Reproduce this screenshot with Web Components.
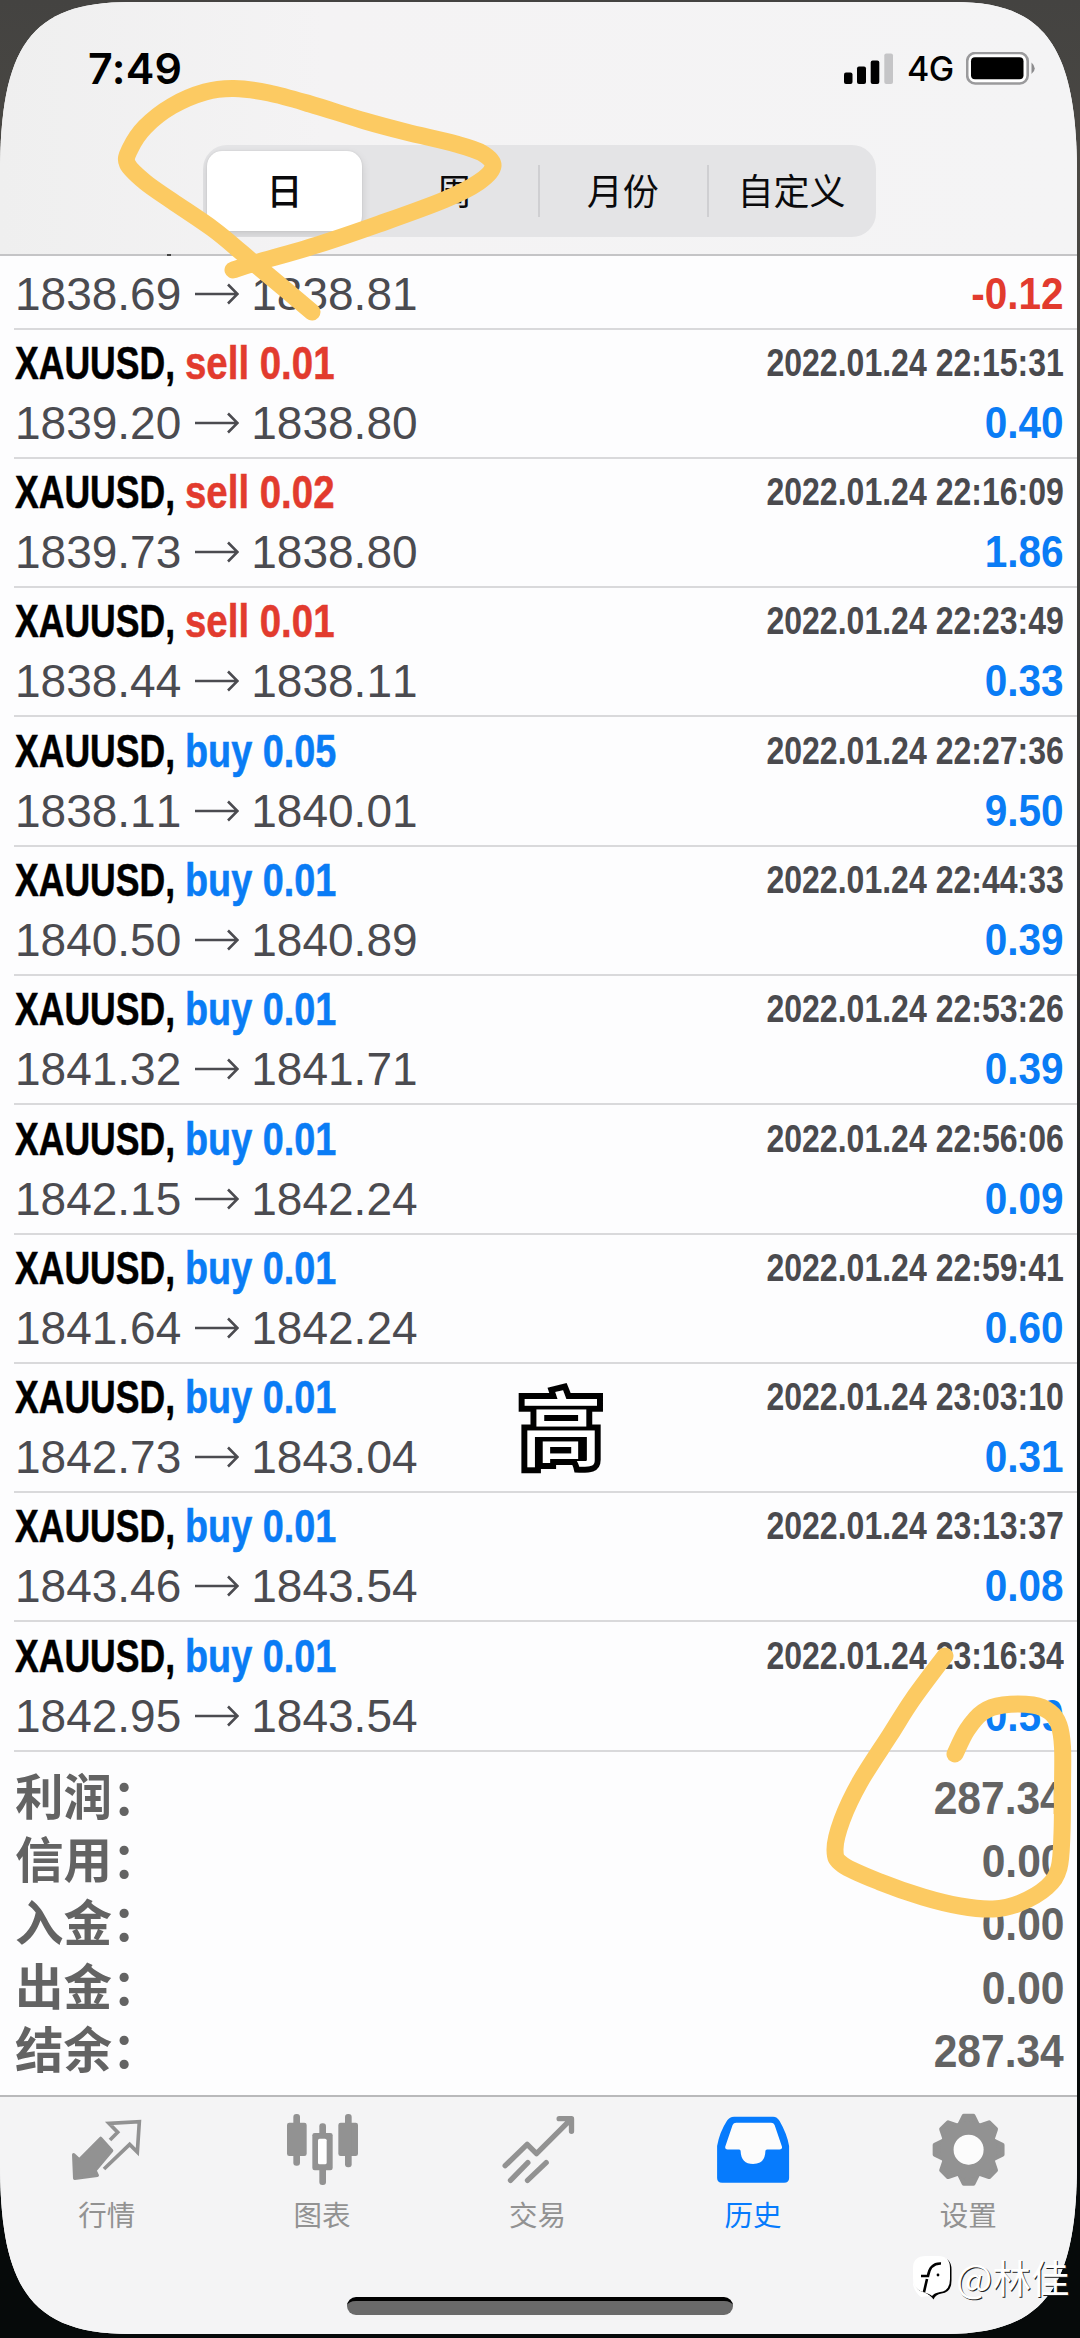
<!DOCTYPE html>
<html lang="zh">
<head>
<meta charset="utf-8">
<title>历史</title>
<style>
html,body{margin:0;padding:0}
body{width:1080px;height:2338px;overflow:hidden;background:linear-gradient(#444341 0,#4a4843 180px,#333 900px,#060a0a 1700px,#060a0a 100%);font-family:"Liberation Sans","Noto Sans CJK SC",sans-serif}
</style>
</head>
<body>
<history-app></history-app>
<script>
const CJK = '"Noto Sans CJK SC",sans-serif';
function define(name, render) {
  customElements.define(name, class extends HTMLElement {
    connectedCallback() {
      if (this.shadowRoot) return;
      this.attachShadow({mode: 'open'}).innerHTML = render(this);
    }
  });
}

/* Horizontally condensed text; the scale and anchor come from attributes. */
define('cond-text', el => `<style>
:host{display:block;white-space:pre;font-kerning:none}
span{display:inline-block;transform:scaleX(${el.getAttribute('scale')});transform-origin:${el.getAttribute('anchor') || 'left'} center}
</style><span><slot></slot></span>`);

define('status-bar', () => `<style>
:host{display:flex;height:93px;padding:0 41px 0 88px;align-items:flex-start;justify-content:space-between;color:#000;font-family:Inter,sans-serif}
.time{font-size:43px;font-weight:600;line-height:52px;margin-top:39.500px;letter-spacing:.3px}
.right{display:flex;margin-top:50px;height:36px;align-items:flex-start}
.net{font-size:34px;font-weight:500;line-height:36px;width:59px;margin:-1px 0 0 13px;letter-spacing:-.5px}
svg{display:block}
</style>
<div class="time">7:49</div>
<div class="right">
<svg width="50" height="36" viewBox="0 0 50 36"><rect x="0" y="20.500" width="8.500" height="11.500" rx="2"/><rect x="13" y="14.500" width="9" height="17.500" rx="2"/><rect x="26.700" y="8.500" width="8.600" height="23.500" rx="2"/><rect x="40.300" y="1.500" width="8.700" height="30.500" rx="2" fill="#c5c5c7"/></svg>
<div class="net">4G</div>
<svg width="70" height="36" viewBox="0 0 70 36"><rect x="1.200" y="1" width="60.500" height="30.500" rx="8" fill="#fff" stroke="#9a9a9c" stroke-width="2.600"/><rect x="5" y="5.300" width="52.500" height="22" rx="4"/><path d="M65.500 10.500Q72 16.500 65.500 22Z" fill="#8c8c8e"/></svg>
</div>`);

define('seg-item', el => `<style>
:host{display:flex;flex:1;height:80px;align-items:center;justify-content:center;font:400 36px/40px ${CJK};color:#0a0a0c}
div{display:flex;flex:1;height:80px;align-items:center;justify-content:center;padding-bottom:5px;box-sizing:border-box}
:host([on]) div{background:#fff;border-radius:15px;box-shadow:0 4px 10px rgba(0,0,0,.12),0 0 2px rgba(0,0,0,.1);margin-right:7.500px}
:host([line])::before{content:"";width:2px;height:52px;background:#cfcfd2;margin-right:-2px}
:host([on]){font-weight:500}
</style><div><slot></slot></div>`);

define('seg-control', () => `<style>
:host{display:flex;width:673px;height:92px;margin:50px 0 0 203px;padding:0 0 0 4px;box-sizing:border-box;align-items:center;border-radius:24px;background:#e4e4e6;overflow:hidden}
seg-item[on]{flex:none;width:162.500px}
</style><seg-item on>日</seg-item><seg-item>周</seg-item><seg-item line>月份</seg-item><seg-item line>自定义</seg-item>`);

define('top-bar', () => `<style>
:host{display:block;height:254px;box-sizing:border-box;border-bottom:2px solid #c4c4c6;background:linear-gradient(90deg,#efefef,#f4f3f4 30%,#f4f4f5)}
</style><status-bar></status-bar><seg-control></seg-control>`);

define('deal-row', el => {
  const g = n => el.getAttribute(n);
  const side = g('side'), neg = g('pl').startsWith('-');
  return `<style>
:host{display:flex;flex-direction:column;justify-content:flex-end;box-sizing:border-box;height:129.300px;margin-left:14px;padding:0 13px 4px 0;border-bottom:2px solid #d9d9db}
.line{display:flex;justify-content:space-between;height:60px;line-height:60px;font-size:46px}
.top{font-weight:700}
.top .l{-webkit-text-stroke:.5px currentColor}
.l{display:flex}
.sym{width:169.500px;margin-left:1px;color:#000}
.deal{color:${side === 'buy' ? '#0a7cf5' : '#e23b2e'}}
.date{font-size:38px;line-height:60px;color:#4a4a4e}
.price{color:#4b4b50;margin-left:1px;font-kerning:none}
svg{width:44px;height:60px;margin:0 12px 0 14px}
.pl{font-weight:700;font-size:45px;color:${neg ? '#e23b2e' : '#0a7cf5'}}
</style>
${g('date') ? `<div class="line top"><div class="l"><cond-text class="sym" scale=".773">XAUUSD,</cond-text><cond-text class="deal" scale="${side === 'buy' ? .822 : .835}">${side} ${g('lot')}</cond-text></div><cond-text class="date" scale=".843" anchor="right">${g('date')}</cond-text></div>` : ''}
<div class="line"><div class="l price"><span>${g('from')}</span><svg viewBox="0 0 44 60" fill="none" stroke="#4b4b50" stroke-width="2.600"><path d="M0 30H42M33 20.500L42.500 30L33 39.500"/></svg><span>${g('to')}</span></div><cond-text class="pl" scale=".9" anchor="right">${g('pl')}</cond-text></div>`;
});

define('sum-row', el => `<style>
:host{display:flex;justify-content:space-between;height:63.200px;line-height:63px;color:#636363;font-weight:700;padding:0 13px 0 15px}
.k{font:700 48.500px/63px ${CJK};margin-top:-3px}
.v{font-size:47px}
</style><div class="k">${el.getAttribute('k')}：</div><cond-text class="v" scale=".905" anchor="right">${el.getAttribute('v')}</cond-text>`);

let teeth = '';
for (let i = 0; i < 8; i++) teeth += `<path transform="rotate(${i * 45})" d="M-9.500 -24L-4.700 -33.700H4.700L9.500 -24Z"/>`;
const icons = {
  quotes: ['23 30 240 240', `<path fill="#929292" stroke="#929292" stroke-width="10" stroke-linejoin="round" d="M121 115L154 152L104 211L111 226L43 235L40 164L57 180Z"/><path fill="none" stroke="#929292" stroke-width="11" d="M149 120L172 97L146 70L237 65L231 156L208 133L131 207"/>`],
  chart: ['669 30 240 240', `<g fill="#929292"><rect x="681" y="68" width="59" height="100" rx="7"/><rect x="700" y="42" width="20" height="155" rx="9"/><rect x="835" y="68" width="59" height="100" rx="7"/><rect x="855" y="42" width="20" height="160" rx="9"/><rect x="757" y="99" width="61" height="112" rx="7"/><rect x="778" y="70" width="20" height="185" rx="9"/></g><rect x="774" y="116" width="26" height="77" rx="5" fill="#fff"/>`],
  trade: ['25.500 30 240 240', `<path fill="none" stroke="#929292" stroke-width="16" stroke-linecap="round" stroke-linejoin="round" d="M44 197L110 133L138 161L241 58M206 56H243V94M60 241L112 188M111 241L167 188"/>`],
  history: ['713.900 2110 80 80', `<path fill="#fcfcfc" d="M732 2120H775L784 2150H766V2166H740V2150H723Z"/><path fill="#067bfd" fill-rule="evenodd" d="M734 2116.700H773Q777 2116.700 779.500 2121Q787 2134 789 2146V2178Q789 2182.700 784 2182.700H722Q717 2182.700 717 2178V2146Q719.500 2132 727 2120.500Q729.500 2116.700 734 2116.700ZM736 2122.700Q733.500 2122.700 732.500 2125L725.200 2146.500Q724.500 2149.500 727.500 2149.500H739Q740.500 2149.500 740.500 2151Q741 2164 753 2164Q765 2164 765.300 2151Q765.300 2149.500 767 2149.500H779.500Q782.500 2149.500 781.800 2146.500L774.500 2125Q773.500 2122.700 771 2122.700Z"/>`],
  settings: ['929.300 2110 80 80', `<g transform="translate(968.900 2149.700)"><g fill="#929292" stroke="#929292" stroke-width="4.500" stroke-linejoin="round">${teeth}</g><circle r="21.500" fill="none" stroke="#929292" stroke-width="14"/><circle r="15" fill="#fcfcfc"/></g>`]
};
define('tab-item', el => {
  const [vb, body] = icons[el.getAttribute('icon')];
  return `<style>
:host{display:flex;flex:1;flex-direction:column;align-items:center;padding-top:13px;color:#929292;font:400 28.500px/40px ${CJK}}
:host([on]){color:#067bfd}
svg{width:80px;height:80px;display:block;margin-bottom:4px}
span{margin-left:-2px}
</style><svg viewBox="${vb}">${body}</svg><span><slot></slot></span>`;
});

define('tab-bar', () => `<style>
:host{display:flex;flex-direction:column;flex:1;border-top:2px solid #b9b9bb;background:#f4f4f5}
nav{display:flex;height:180px}
.home{width:386px;height:14px;margin:20px 0 0 347px;border-radius:9px;background:#6a6a6a;border-top:4px solid #000}
</style><nav><tab-item icon="quotes">行情</tab-item><tab-item icon="chart">图表</tab-item><tab-item icon="trade">交易</tab-item><tab-item icon="history" on>历史</tab-item><tab-item icon="settings">设置</tab-item></nav><div class="home"></div>`);

/* Marker strokes drawn by hand over the list, smoothed with Catmull-Rom. */
const strokes = [
  [[233,270],[255,263],[317,245],[379,224],[444,200],[479,182],[493,166],[482,153],[456,144],[406,132],[365,121],[310,104],[269,93],[234,88.500],[205,92],[172,106],[145,127],[130,149],[127.500,164],[145,182],[172,201],[213,229],[241,252],[262,270],[286,290],[312,312]],
  [[945,1656],[913,1699],[890,1735],[860,1782],[842,1820],[835,1850],[843,1865],[880,1882],[923,1897],[960,1906],[993,1909],[1020,1903],[1047,1887],[1059,1868],[1062,1833],[1062.500,1787],[1062.500,1747],[1059,1725],[1050,1712],[1033,1705],[1003,1705],[983,1712],[967,1730],[955,1754]]
];
const smooth = p => {
  let d = `M${p[0]}`;
  for (let i = 0; i < p.length - 1; i++) {
    const a = p[i - 1] || p[i], b = p[i], c = p[i + 1], e = p[i + 2] || c;
    d += `C${b[0] + (c[0] - a[0]) / 6} ${b[1] + (c[1] - a[1]) / 6} ${c[0] - (e[0] - b[0]) / 6} ${c[1] - (e[1] - b[1]) / 6} ${c}`;
  }
  return d;
};
define('marker-layer', () => `<style>
:host{position:absolute;left:0;top:0;width:1080px;height:2338px;pointer-events:none}
svg{display:block}
</style><svg width="1080" height="2338" fill="none" stroke="#fcca62" stroke-width="17" stroke-linecap="round" stroke-linejoin="round">${strokes.map(s => `<path d="${smooth(s)}"/>`).join('')}
<text x="561" y="1459.500" text-anchor="middle" font-family="Noto Sans CJK SC" font-weight="500" font-size="82" fill="#fff" stroke="#000" stroke-width="12" stroke-linejoin="miter" stroke-miterlimit="3" stroke-linecap="butt" paint-order="stroke">高</text></svg>`);

define('water-mark', () => `<style>
:host{position:absolute;left:913px;top:2251px;display:flex;align-items:center;height:50px;color:#fff;font:400 38.500px/50px ${CJK};text-shadow:1px 1px 0 #222;white-space:nowrap}
svg{width:42px;height:50px;margin-right:1px}
</style><svg viewBox="0 0 42 50"><path transform="translate(1.500 1.500)" fill="#000" d="M13 5H25Q37 5 37 17V28Q37 40 27 41Q21 42 19 47Q17 43 10 41Q0 38 0 27V17Q0 5 13 5Z"/><path fill="#fff" d="M13 5H25Q37 5 37 17V28Q37 40 27 41Q21 42 19 45Q17 43 10 41Q0 38 0 27V17Q0 5 13 5Z"/><path fill="#fff" d="M0 20V27Q0 38 10 41Q15 42.500 17 45L8 46Q-3 38 0 20Z"/><path fill="none" stroke="#000" stroke-width="2.600" d="M11 41L14 28M8 25H15Q17 12 28 12.500"/><circle cx="25" cy="24" r="1.400"/></svg><span>@林佳</span>`);

const deals = [
  ['', 'sell', '', '1838.69', '1838.81', '-0.12'],
  ['22:15:31', 'sell', '0.01', '1839.20', '1838.80', '0.40'],
  ['22:16:09', 'sell', '0.02', '1839.73', '1838.80', '1.86'],
  ['22:23:49', 'sell', '0.01', '1838.44', '1838.11', '0.33'],
  ['22:27:36', 'buy', '0.05', '1838.11', '1840.01', '9.50'],
  ['22:44:33', 'buy', '0.01', '1840.50', '1840.89', '0.39'],
  ['22:53:26', 'buy', '0.01', '1841.32', '1841.71', '0.39'],
  ['22:56:06', 'buy', '0.01', '1842.15', '1842.24', '0.09'],
  ['22:59:41', 'buy', '0.01', '1841.64', '1842.24', '0.60'],
  ['23:03:10', 'buy', '0.01', '1842.73', '1843.04', '0.31'],
  ['23:13:37', 'buy', '0.01', '1843.46', '1843.54', '0.08'],
  ['23:16:34', 'buy', '0.01', '1842.95', '1843.54', '0.59']
];
const sums = [['利润', '287.34'], ['信用', '0.00'], ['入金', '0.00'], ['出金', '0.00'], ['结余', '287.34']];

define('history-app', () => `<style>
:host{display:block;position:relative;width:1080px;height:2338px;padding-top:2px;box-sizing:border-box}
.phone{display:flex;flex-direction:column;width:1077px;height:2332px;background:#fdfdfe;clip-path:path("M0 173C0 45 30 0 130 0H955C1045 0 1077 45 1077 173V2160C1077 2285 1045 2332 945 2332H130C30 2332 0 2285 0 2160Z")}
.list{height:1496px}
.list deal-row:first-child{height:73.500px}
.sums{height:329px;padding:14px 0 0;display:flex;flex-direction:column}
.tail{width:4px;height:2px;margin:-2px 0 0 167px;background:#444}
</style>
<div class="phone"><top-bar></top-bar><div class="tail"></div>
<div class="list">${deals.map(([t, s, l, f, o, p]) => `<deal-row date="${t && '2022.01.24 ' + t}" side="${s}" lot="${l}" from="${f}" to="${o}" pl="${p}"></deal-row>`).join('')}</div>
<div class="sums">${sums.map(([k, v]) => `<sum-row k="${k}" v="${v}"></sum-row>`).join('')}</div>
<tab-bar></tab-bar></div>
<marker-layer></marker-layer><water-mark></water-mark>`);
</script>
</body>
</html>
